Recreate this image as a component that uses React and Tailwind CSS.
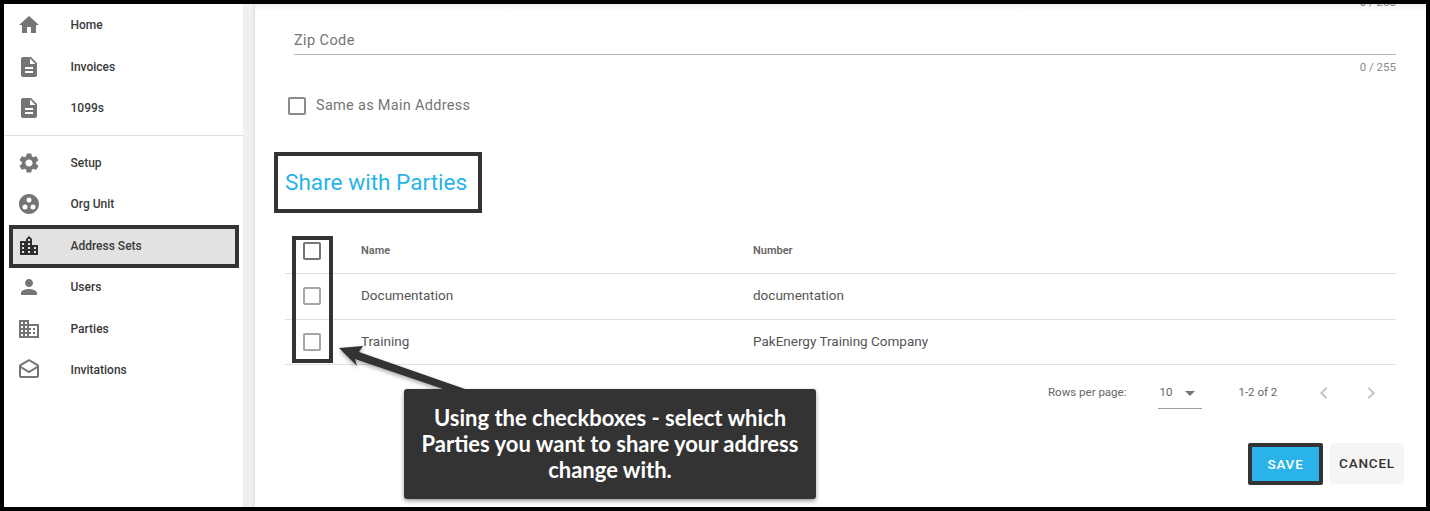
import React from "react";
import {
  MdHome,
  MdDescription,
  MdSettings,
  MdGroupWork,
  MdLocationCity,
  MdPerson,
  MdOutlineBusiness,
  MdOutlineDrafts,
  MdCheckBoxOutlineBlank,
  MdChevronLeft,
  MdChevronRight,
  MdArrowDropDown,
} from "react-icons/md";

const topNav = [
  { label: "Home", icon: MdHome },
  { label: "Invoices", icon: MdDescription },
  { label: "1099s", icon: MdDescription },
];

const bottomNav = [
  { label: "Setup", icon: MdSettings },
  { label: "Org Unit", icon: MdGroupWork },
  { label: "Address Sets", icon: MdLocationCity, active: true },
  { label: "Users", icon: MdPerson },
  { label: "Parties", icon: MdOutlineBusiness },
  { label: "Invitations", icon: MdOutlineDrafts },
];

const parties = [
  { name: "Documentation", number: "documentation" },
  { name: "Training", number: "PakEnergy Training Company" },
];

function NavItem({ item }) {
  const Icon = item.icon;
  return (
    <div className="relative flex h-[41.5px] items-center pl-[12.5px]">
      {item.active && (
        <div className="absolute top-0 left-[5px] h-[43px] w-[230px] border-4 border-[#333333] bg-[#e2e2e2]" />
      )}
      <Icon className={`relative size-6 shrink-0 ${item.active ? "text-[#2f2f2f]" : "text-[#757575]"}`} />
      <span className="relative ml-[30px] text-[12px] font-medium text-[#3a3a3a]">{item.label}</span>
    </div>
  );
}

function Sidebar() {
  return (
    <aside className="w-[239px] shrink-0 bg-white pt-[0.5px]">
      {topNav.map((item) => (
        <NavItem key={item.label} item={item} />
      ))}
      <div className="my-[6px] h-px bg-[#e0e0e0]" />
      {bottomNav.map((item) => (
        <NavItem key={item.label} item={item} />
      ))}
    </aside>
  );
}

function Row({ name, number }) {
  return (
    <div className="flex h-[45.5px] items-center border-b border-[#e0e0e0] text-[13.5px] text-[#555555]">
      <div className="w-[76px] pl-[15px]">
        <MdCheckBoxOutlineBlank className="size-6 text-[#a6a6a6]" />
      </div>
      <div className="w-[392px] pb-[2px]">{name}</div>
      <div className="pb-[2px]">{number}</div>
    </div>
  );
}

function Pagination() {
  return (
    <div className="flex h-[56px] items-center text-[11.5px] text-[#666666]">
      <span className="ml-[763px]">Rows per page:</span>
      <div className="ml-[32px] flex h-[32px] w-[44px] items-center justify-between border-b border-[#9e9e9e]">
        <span className="pl-[1px]">10</span>
        <MdArrowDropDown className="size-6 text-[#757575]" />
      </div>
      <span className="ml-[36px]">1-2 of 2</span>
      <MdChevronLeft className="ml-[35px] size-6 text-[#c4c4c4]" />
      <MdChevronRight className="ml-[23px] size-6 text-[#c4c4c4]" />
    </div>
  );
}

export default function App() {
  return (
    <div className="relative flex h-[511px] w-[1430px] overflow-hidden border-4 border-black bg-[#f0f0f0] font-['Roboto',sans-serif]">
      <Sidebar />
      <main className="relative ml-[12px] flex-1 overflow-hidden bg-white pr-[30px] pl-[39px] shadow-[0_0_4px_rgba(0,0,0,0.15)]">
        <div className="absolute inset-x-0 top-0 h-[6px] bg-gradient-to-b from-[#00000014] to-transparent" />
        <div className="-mt-[9px] text-right text-[11.5px] leading-[14px] text-[#8a8a8a]">0 / 255</div>

        <div className="mt-[15px] flex h-[31px] items-center border-b border-[#b5b5b5] pt-[3px] text-[14.5px] tracking-[0.4px] text-[#757575]">
          Zip Code
        </div>
        <div className="mt-[5px] text-right text-[11.5px] leading-[14px] text-[#8a8a8a]">0 / 255</div>

        <div className="mt-[20px] -ml-[8px] flex h-[24px] items-center text-[14.5px] tracking-[0.3px] text-[#757575]">
          <MdCheckBoxOutlineBlank className="-ml-[1px] size-6 text-[#8a8a8a]" />
          <span className="ml-[7px]">Same as Main Address</span>
        </div>

        <h2 className="mt-[35px] -ml-[9px] h-[60px] text-[22.6px] leading-[59px] font-normal text-[#29b3e8]">
          Share with Parties
        </h2>

        <div className="mt-[15px] -ml-[9px]">
          <div className="flex h-[46px] items-center border-b border-[#e0e0e0] text-[11px] font-semibold text-[#666666]">
            <div className="w-[76px] pl-[15px]">
              <MdCheckBoxOutlineBlank className="size-6 text-[#757575]" />
            </div>
            <div className="w-[392px] pt-[2px]">Name</div>
            <div className="pt-[2px]">Number</div>
          </div>
          {parties.map((party) => (
            <Row key={party.name} name={party.name} number={party.number} />
          ))}
          <Pagination />
        </div>

        <div className="mt-[22px] -mr-[8px] flex justify-end gap-[7px]">
          <button className="h-[42px] w-[75px] rounded-[2px] border-4 border-[#333333] bg-[#29b3e8] text-[13.5px] font-medium tracking-[0.8px] text-white">
            SAVE
          </button>
          <button className="h-[41px] w-[74px] rounded-[4px] bg-[#f5f5f5] text-[13.5px] font-medium tracking-[0.8px] text-[#333333]">
            CANCEL
          </button>
        </div>
      </main>

      {/* annotations on top of the page */}
      <div className="absolute top-[148px] left-[270px] h-[61px] w-[208px] border-4 border-[#333333]" />
      <div className="absolute top-[232px] left-[288px] h-[127px] w-[41px] border-4 border-[#333333]" />
      <svg className="absolute top-[336px] left-[330px]" width="150" height="60" viewBox="0 0 150 60">
        <path
          d="M5 8 L29 6 L25 12 L131 49 L109 49 L21 19 L23 26 Z"
          fill="#333333"
          style={{ filter: "drop-shadow(0 2px 2px rgba(0,0,0,0.35))" }}
        />
      </svg>
      <div className="absolute top-[385px] left-[400px] flex h-[110px] w-[412px] items-center justify-center rounded-[3px] bg-[#333333] px-[14px] text-center font-['Lato',sans-serif] text-[22px] leading-[26px] font-bold text-white shadow-[0_2px_4px_rgba(0,0,0,0.4)]">
        Using the checkboxes - select which Parties you want to share your address change with.
      </div>
    </div>
  );
}
